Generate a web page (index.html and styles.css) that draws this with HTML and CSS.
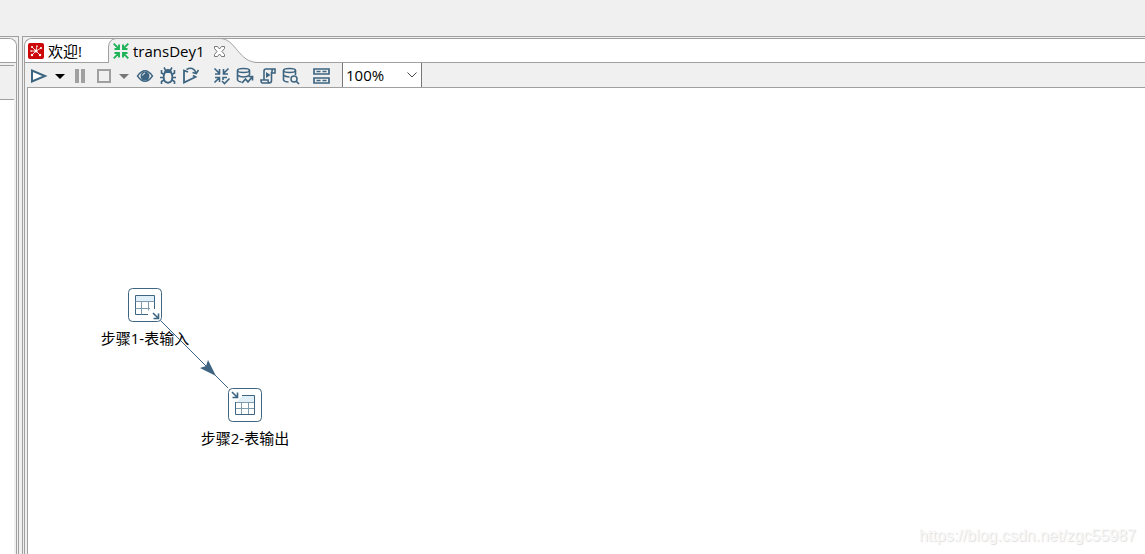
FILE: index.html
```html
<!DOCTYPE html>
<html lang="zh-CN">
<head>
    <meta charset="UTF-8">
    <title>transDey1</title>
    <link rel="stylesheet" href="styles.css">
</head>
<body>
    <div class="workspace">
        <aside class="side-panel">
            <div class="side-inner">
                <div class="side-tab"></div>
                <div class="side-toolbar"></div>
                <div class="side-tree"></div>
            </div>
        </aside>
        <main class="editor">
            <div class="editor-inner">
                <nav class="tabs">
                    <a class="tab" href="#welcome">
                        <svg width="16" height="16" viewBox="0 0 16 16">
                            <rect width="16" height="16" rx="2" fill="#cc0808"/>
                            <path d="M8 8L4 4M8 8L9 3M8 8l5-3M8 8l4 4M8 8l-4 4M8 8H3" stroke="#fff" stroke-width=".8"/>
                            <g fill="#fff"><circle cx="8" cy="8" r="1.6"/><circle cx="4" cy="4" r="1"/><circle cx="9" cy="3" r=".8"/><circle cx="13" cy="5" r="1.1"/><circle cx="12" cy="12" r="1.2"/><circle cx="4" cy="12" r="1.2"/><circle cx="3" cy="8" r=".8"/></g>
                        </svg>
                        <span>欢迎!</span>
                    </a>
                    <a class="tab tab-active" href="#transformation">
                        <svg class="tab-shape" width="150" height="25" viewBox="0 0 150 25">
                            <path d="M0 25.5V9Q1 1 8 .5H112C128 .5 130 24.5 150 24.5V25.5z" fill="#f0f0f0"/>
                            <path d="M.5 25V9Q1 1 8 .5H112C128 .5 130 24.5 150 24.5" fill="none" stroke="#a0a0a0"/>
                        </svg>
                        <svg class="tab-icon" width="16" height="16" viewBox="0 0 16 16" fill="none" stroke="#1fb257" stroke-width="1.9">
                            <path d="M.7.7l5 5M15.3.7l-5 5M.7 15.3l5-5M15.3 15.3l-5-5M6 1.5V6H1.5M10 1.5V6h4.5M6 14.5V10H1.5M10 14.5V10h4.5"/>
                        </svg>
                        <span>transDey1</span>
                        <svg class="tab-close" width="11" height="11" viewBox="0 0 11 11" fill="#fff" stroke="#777">
                            <path d="M.5.5h3l2 2.5 2-2.5h3v2L8 5.5l2.5 3v2h-3l-2-2.5-2 2.5h-3v-2l2.5-3L.5 2.5z"/>
                        </svg>
                    </a>
                </nav>
                <div class="toolbar">
                    <button aria-label="运行"><svg viewBox="0 0 23 24"><path d="M4 7.5v11L17 13z" fill="#fff"/></svg></button>
                    <button class="caret" aria-label="运行选项"><svg viewBox="0 0 18 24"><path d="M4 11h10l-5 5z"/></svg></button>
                    <button class="off" aria-label="暂停"><svg viewBox="0 0 23 24"><path d="M8 6v14M14 6v14" stroke-width="4"/></svg></button>
                    <button class="off" aria-label="停止"><svg viewBox="0 0 23 24"><path d="M6 7h12v12H6z"/></svg></button>
                    <button class="caret caret-off" aria-label="停止选项"><svg viewBox="0 0 18 24"><path d="M4 11h10l-5 5z"/></svg></button>
                    <button aria-label="预览"><svg viewBox="0 0 23 24"><path d="M4.5 13Q12 2.5 19.5 13Q12 23.500 4.5 13z" stroke-width="1.3"/><circle class="solid" cx="12" cy="13" r="4.5"/><path d="M9.5 12.5q.5-2 2.500-2.500" stroke="#fff" stroke-width="1"/></svg></button>
                    <button aria-label="调试"><svg viewBox="0 0 23 24"><path d="M8.5 10Q12 7.5 15.5 10Q17.5 15 15 18.5Q12 21 9 18.5Q6.5 15 8.5 10z" stroke-width="1.8"/><path class="solid" d="M8 10a4 4 0 0 1 8 0z"/><path d="M9.500 7L8 4.5M14.500 7L16 4.5M8 11.500L5.500 10V7M16 11.500l2.500-1.500V7M7.500 14.500H4M16.500 14.500H20M8 17l-2.500 1.500V21M16 17l2.500 1.500V21" stroke-width="1.6"/></svg></button>
                    <button aria-label="重放"><svg viewBox="0 0 23 24"><path d="M9 9L5 7.500v12L16.500 14l-2.500-1.500" stroke-width="1.8"/><path d="M7.500 6.500Q14 3 17 9.500M13.500 9.500l3.700 1L19.500 7" stroke-width="1.6"/></svg></button>
                    <button class="group" aria-label="检查"><svg viewBox="0 0 23 24"><path d="M4.500 5.500l5 5M18.500 5.500l-5 5M4.500 19.500l5-5M9.500 6v5H5M13.500 6v5H18M9.500 19v-4.500H5M13 17v-2.500h4" stroke-width="1.6"/><path d="M12 18l2.500 2.500 5-5" stroke-width="1.6"/></svg></button>
                    <button aria-label="影响分析"><svg viewBox="0 0 23 24"><ellipse cx="10.5" cy="7.5" rx="6" ry="2" stroke-width="1.6"/><path d="M4.5 7.5v9.500q1 2 4 2M16.5 7.5V12M4.5 12q2 2 6 2 4 0 6-2" stroke-width="1.6"/><path d="M9 20l3.500-4 2.500 3 4-5M15.5 13.500h4v4" stroke-width="1.7"/></svg></button>
                    <button aria-label="生成SQL"><svg viewBox="0 0 23 24"><path d="M8 17V8q0-2 2-2h9v4h-3V8q0-2 2-2M15.500 9v8.500q0 2.500-2.500 2.500H6.500Q5 20 5 17h7q0 2.500 1 3" stroke-width="1.6"/><path class="solid" d="M10 9v6l4.500-3z"/></svg></button>
                    <button aria-label="浏览数据库"><svg viewBox="0 0 23 24"><ellipse cx="10.5" cy="7.5" rx="6" ry="2" stroke-width="1.6"/><path d="M4.5 7.5v9.500q1 2 5 2M16.5 7.5V12M4.5 12q2 2 6 2" stroke-width="1.6"/><circle cx="15" cy="16" r="3" stroke-width="1.5"/><path d="M17 18l3 3" stroke-width="1.7"/></svg></button>
                    <button class="group" aria-label="显示结果"><svg viewBox="0 0 23 24"><path d="M4 6h15v5H4zM4 15h15v5H4z" stroke-width="1.7"/><path d="M6.500 8.500h4M12.500 8.500h4M6.500 17.500h4M12.500 17.500h4" stroke-width="1.5"/></svg></button>
                    <div class="zoom">
                        <select aria-label="缩放">
                            <option>100%</option>
                            <option>75%</option>
                            <option>50%</option>
                        </select>
                        <svg width="10" height="6" viewBox="0 0 10 6" fill="none" stroke="#444"><path d="M.5.5L5 5 9.5.5"/></svg>
                    </div>
                </div>
                <div class="canvas">
                    <div class="step step-input">
                        <svg width="34" height="34" viewBox="0 0 34 34" fill="none" stroke="#3d6480">
                            <rect x=".5" y=".5" width="33" height="33" rx="4" fill="#fff"/>
                            <path d="M8 8h18v5H8z" fill="#e1f0f8" stroke="none"/>
                            <path d="M26.5 21V7.5h-19v19H20"/>
                            <path d="M7.5 13.5h19M7.5 20.5H22M13.5 13.5v13M20.5 13.5v9" stroke="#7f9bae"/>
                            <path d="M25 25l5 5M30.5 25.5v5h-5" stroke-width="1.600"/>
                        </svg>
                        <span>步骤1-表输入</span>
                    </div>
                    <div class="step step-output">
                        <svg width="34" height="34" viewBox="0 0 34 34" fill="none" stroke="#3d6480">
                            <rect x=".5" y=".5" width="33" height="33" rx="4" fill="#fff"/>
                            <path d="M14 8h12v6H9z" fill="#e1f0f8" stroke="none"/>
                            <path d="M14 7.5h12.5v19h-19V14"/>
                            <path d="M8 14.5h18M8 20.5h18M13.5 14.5V26M20.5 14.5V26" stroke="#7f9bae"/>
                            <path d="M4 4l5 5M9.5 4.5v5h-5" stroke-width="1.600"/>
                        </svg>
                        <span>步骤2-表输出</span>
                    </div>
                    <svg class="hop" width="68" height="68" viewBox="0 0 68 68">
                        <path d="M0 0l67 67" stroke="#3d6480"/>
                        <path d="M55 55L39 47l6-2 2-6z" fill="#3d6480"/>
                    </svg>
                    <span class="watermark">https://blog.csdn.net/zgc55987</span>
                </div>
            </div>
        </main>
    </div>
</body>
</html>
```

FILE: styles.css
```css
* { box-sizing: border-box; }
body {
    margin: 0; height: 100vh; padding-top: 36px; overflow: hidden;
    display: flex; background: #f0f0f0; color: #000;
    font: 15px/20px "Open Sans", "Noto Sans CJK SC", sans-serif;
}
.workspace { flex: 1; display: flex; gap: 3px; min-width: 0; }

.side-panel {
    flex: none; width: 19px; display: flex; padding: 1px 1px 0 0;
    border-top: 1px solid #a0a0a0; border-right: 1px solid #a0a0a0;
}
.side-inner {
    flex: 1; display: flex; flex-direction: column;
    border-top: 1px solid #a0a0a0; border-right: 1px solid #a0a0a0;
    border-top-right-radius: 8px; overflow: hidden;
}
.side-tab { height: 24px; background: #fff; border-bottom: 1px solid #a0a0a0; }
.side-toolbar {
    height: 35px; margin: 2px 2px 0 0;
    border-top: 1px solid #a0a0a0; border-bottom: 1px solid #a0a0a0;
}
.side-tree { flex: 1; margin-right: 2px; background: #fff; }

.editor {
    flex: 1; display: flex; min-width: 0; padding: 1px 0 0 1px;
    border-top: 1px solid #a0a0a0; border-left: 1px solid #a0a0a0;
}
.editor-inner {
    flex: 1; display: flex; flex-direction: column; min-width: 0;
    border-top: 1px solid #a0a0a0; border-left: 1px solid #a0a0a0;
    border-top-left-radius: 8px; overflow: hidden;
}
.tabs {
    display: flex; height: 24px; background: #fff;
    border-bottom: 1px solid #a0a0a0;
}
.tab {
    display: flex; align-items: center; gap: 4px; width: 83px; height: 24px;
    padding-left: 3px; color: #000; text-decoration: none; white-space: nowrap;
}
.tab-active { position: relative; width: 150px; padding-left: 5px; }
.tab-active span, .tab-icon, .tab-close { position: relative; }
.tab-shape { position: absolute; left: 0; top: -1px; }
.tab-close { margin-left: 5px; }

.toolbar { display: flex; height: 24px; padding-left: 3px; }
.toolbar button {
    width: 23px; height: 24px; padding: 0; border: none; background: none;
    color: #3d6480;
}
.toolbar button svg {
    display: block; width: 100%; height: 24px;
    fill: none; stroke: currentColor; stroke-width: 2;
}
.toolbar .solid { fill: currentColor; stroke: none; }
.toolbar .off { color: #a0a0a0; }
.toolbar .caret { width: 18px; color: #000; }
.toolbar .caret-off { color: #777; }
.toolbar .caret svg { fill: currentColor; stroke: none; }
.toolbar .group { margin-left: 8px; }
.zoom {
    display: flex; align-items: center; position: relative; width: 80px; height: 24px;
    margin-left: 9px; background: #fff;
    border-left: 1px solid #777; border-right: 1px solid #777;
}
.zoom select {
    appearance: none; width: 100%; padding: 0 3px; border: none;
    background: none; color: #000; font: inherit;
}
.zoom svg { position: absolute; right: 4px; pointer-events: none; }

.canvas {
    flex: 1; position: relative; margin-left: 2px; background: #fff;
    border-top: 1px solid #a0a0a0; border-left: 1px solid #a0a0a0;
}
.step {
    position: absolute; width: 100px;
    display: flex; flex-direction: column; align-items: center; gap: 6px;
    white-space: nowrap;
}
.step-input { left: 67px; top: 200px; }
.step-output { left: 167px; top: 300px; }
.hop { position: absolute; left: 133px; top: 233px; }
.watermark {
    position: absolute; right: 9px; bottom: 8px;
    color: #f8f8f8; text-shadow: 1px 1px 1px #ddd;
    font: 16px/20px "Liberation Sans", sans-serif;
}
```
